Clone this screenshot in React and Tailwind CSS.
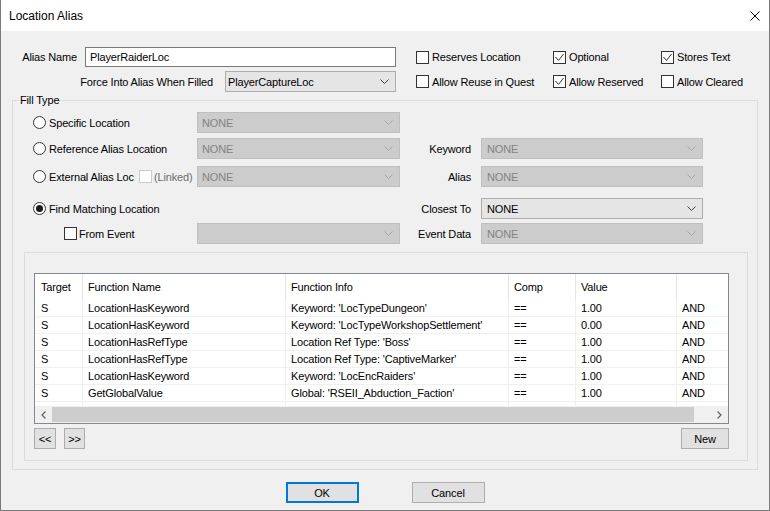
import React from 'react';

const conditions = [
  { target: 'S', name: 'LocationHasKeyword', info: "Keyword: 'LocTypeDungeon'", comp: '==', value: '1.00', op: 'AND' },
  { target: 'S', name: 'LocationHasKeyword', info: "Keyword: 'LocTypeWorkshopSettlement'", comp: '==', value: '0.00', op: 'AND' },
  { target: 'S', name: 'LocationHasRefType', info: "Location Ref Type: 'Boss'", comp: '==', value: '1.00', op: 'AND' },
  { target: 'S', name: 'LocationHasRefType', info: "Location Ref Type: 'CaptiveMarker'", comp: '==', value: '1.00', op: 'AND' },
  { target: 'S', name: 'LocationHasKeyword', info: "Keyword: 'LocEncRaiders'", comp: '==', value: '1.00', op: 'AND' },
  { target: 'S', name: 'GetGlobalValue', info: "Global: 'RSEII_Abduction_Faction'", comp: '==', value: '1.00', op: 'AND' },
];

function Chevron({ color }) {
  return (
    <svg width="9" height="5" viewBox="0 0 9 5" className="shrink-0">
      <path d="M0.5 0.5 L4.5 4.5 L8.5 0.5" fill="none" stroke={color} strokeWidth="1" />
    </svg>
  );
}

function Dropdown({ className, value, disabled }) {
  return (
    <div
      className={`flex items-center justify-between h-[21px] border pr-[6px] shrink-0 ${
        disabled ? 'bg-[#cccccc] border-[#bfbfbf] text-[#838383]' : 'bg-[#e5e5e5] border-[#adadad] text-black'
      } ${className}`}
    >
      <span>{value}</span>
      <Chevron color={disabled ? '#a8a8a8' : '#404040'} />
    </div>
  );
}

function Checkbox({ checked, disabled }) {
  return (
    <span
      className={`w-[13px] h-[13px] border bg-white flex items-center justify-center shrink-0 ${
        disabled ? 'border-[#cccccc]' : 'border-[#333333]'
      }`}
    >
      {checked && (
        <svg width="11" height="11" viewBox="0 0 11 11">
          <path d="M1.5 5 L4.5 8.5 L9.5 2" fill="none" stroke="#333333" strokeWidth="1" />
        </svg>
      )}
    </span>
  );
}

function Radio({ checked }) {
  return (
    <span className="w-[13px] h-[13px] rounded-full border border-[#333333] bg-white flex items-center justify-center shrink-0">
      {checked && <span className="w-[7px] h-[7px] rounded-full bg-[#1a1a1a]" />}
    </span>
  );
}

function CheckItem({ className, label, checked }) {
  return (
    <div className={`flex items-center ${className}`}>
      <Checkbox checked={checked} />
      <span className="ml-[3px]">{label}</span>
    </div>
  );
}

function Button({ className, children }) {
  return (
    <div className={`h-[21px] flex items-center justify-center bg-[#e1e1e1] shrink-0 ${className}`}>
      {children}
    </div>
  );
}

export default function App() {
  return (
    <div className="w-[770px] h-[511px] flex flex-col border-x border-b border-[#7a7a7a] bg-[#f0f0f0] text-[11px] leading-[16px] tracking-[-0.15px] text-black font-['Liberation_Sans',Arial,sans-serif] whitespace-nowrap select-none overflow-hidden">
      {/* title bar */}
      <div className="h-[31px] bg-white flex items-center justify-between pl-[8px] pr-[9px] shrink-0">
        <span className="text-[12px] tracking-normal">Location Alias</span>
        <svg width="10" height="10" viewBox="0 0 10 10">
          <path d="M0.5 0.5 L9.5 9.5 M9.5 0.5 L0.5 9.5" stroke="#000" strokeWidth="1" />
        </svg>
      </div>

      <div className="flex flex-col pt-[16px]">
        {/* alias name row */}
        <div className="flex items-center h-[20px]">
          <div className="w-[76px] text-right">Alias Name</div>
          <div className="ml-[8px] w-[311px] h-[20px] bg-white border border-[#7a7a7a] flex items-center pl-[4px]">
            PlayerRaiderLoc
          </div>
          <div className="ml-[20px] flex items-center">
            <CheckItem className="w-[137px]" label="Reserves Location" />
            <CheckItem className="w-[108px]" label="Optional" checked />
            <CheckItem label="Stores Text" checked />
          </div>
        </div>

        {/* force into alias row */}
        <div className="flex items-center h-[21px] mt-[4px]">
          <div className="w-[212px] text-right">Force Into Alias When Filled</div>
          <Dropdown className="ml-[12px] w-[171px] pl-[2px]" value="PlayerCaptureLoc" />
          <div className="ml-[20px] flex items-center">
            <CheckItem className="w-[137px]" label="Allow Reuse in Quest" />
            <CheckItem className="w-[108px]" label="Allow Reserved" checked />
            <CheckItem label="Allow Cleared" />
          </div>
        </div>

        {/* fill type group */}
        <div className="mt-[8px] ml-[11px] w-[746px] h-[370px] border border-[#dcdcdc] flex flex-col">
          <div className="-mt-[9px] ml-[6px] px-[1px] w-fit bg-[#f0f0f0]">Fill Type</div>

          <div className="flex items-center h-[21px] mt-[4px] ml-[20px]">
            <div className="w-[164px] flex items-center">
              <Radio />
              <span className="ml-[3px]">Specific Location</span>
            </div>
            <Dropdown className="w-[203px] pl-[4px]" value="NONE" disabled />
          </div>

          <div className="flex items-center h-[21px] mt-[5px] ml-[20px]">
            <div className="w-[164px] flex items-center">
              <Radio />
              <span className="ml-[3px]">Reference Alias Location</span>
            </div>
            <Dropdown className="w-[203px] pl-[4px]" value="NONE" disabled />
            <div className="w-[71px] text-right">Keyword</div>
            <Dropdown className="ml-[10px] w-[222px] pl-[5px]" value="NONE" disabled />
          </div>

          <div className="flex items-center h-[21px] mt-[7px] ml-[20px]">
            <div className="w-[164px] flex items-center">
              <div className="w-[106px] flex items-center">
                <Radio />
                <span className="ml-[3px]">External Alias Loc</span>
              </div>
              <Checkbox disabled />
              <span className="ml-[2px] text-[#6d6d6d]">(Linked)</span>
            </div>
            <Dropdown className="w-[203px] pl-[4px]" value="NONE" disabled />
            <div className="w-[71px] text-right">Alias</div>
            <Dropdown className="ml-[10px] w-[222px] pl-[5px]" value="NONE" disabled />
          </div>

          <div className="flex items-center h-[21px] mt-[11px] ml-[20px]">
            <div className="w-[164px] flex items-center">
              <Radio checked />
              <span className="ml-[3px]">Find Matching Location</span>
            </div>
            <div className="w-[203px]" />
            <div className="w-[71px] text-right">Closest To</div>
            <Dropdown className="ml-[10px] w-[222px] pl-[5px]" value="NONE" />
          </div>

          <div className="flex items-center h-[21px] mt-[4px] ml-[20px]">
            <div className="w-[164px] flex items-center pl-[31px]">
              <Checkbox />
              <span className="ml-[2px]">From Event</span>
            </div>
            <Dropdown className="w-[203px] pl-[4px]" value="" disabled />
            <div className="w-[71px] text-right">Event Data</div>
            <Dropdown className="ml-[10px] w-[222px] pl-[5px]" value="NONE" disabled />
          </div>

          {/* conditions box */}
          <div className="mt-[8px] ml-[11px] w-[724px] h-[209px] border border-[#dcdcdc] flex flex-col">
            <div className="ml-[9px] mt-[20px] w-[695px] h-[151px] border border-[#828790] bg-white flex flex-col overflow-hidden">
              <div className="h-[26px] flex shrink-0">
                <div className="w-[48px] pl-[6px] flex items-center border-r border-[#e5e5e5]">Target</div>
                <div className="w-[203px] pl-[5px] flex items-center border-r border-[#e5e5e5]">Function Name</div>
                <div className="w-[223px] pl-[5px] flex items-center border-r border-[#e5e5e5]">Function Info</div>
                <div className="w-[67px] pl-[5px] flex items-center border-r border-[#e5e5e5]">Comp</div>
                <div className="w-[101px] pl-[5px] flex items-center border-r border-[#e5e5e5]">Value</div>
                <div className="flex-1" />
              </div>
              {conditions.map((c, i) => (
                <div key={i} className="h-[17px] flex shrink-0 border-b border-[#f0f0f0]">
                  <div className="w-[48px] pl-[6px] flex items-center border-r border-[#f0f0f0]">{c.target}</div>
                  <div className="w-[203px] pl-[5px] flex items-center border-r border-[#f0f0f0]">{c.name}</div>
                  <div className="w-[223px] pl-[5px] flex items-center border-r border-[#f0f0f0]">{c.info}</div>
                  <div className="w-[67px] pl-[5px] flex items-center border-r border-[#f0f0f0]">{c.comp}</div>
                  <div className="w-[101px] pl-[5px] flex items-center border-r border-[#f0f0f0]">{c.value}</div>
                  <div className="flex-1 pl-[5px] flex items-center">{c.op}</div>
                </div>
              ))}
              <div className="h-[4px] flex shrink-0">
                <div className="w-[48px] border-r border-[#f0f0f0]" />
                <div className="w-[203px] border-r border-[#f0f0f0]" />
                <div className="w-[223px] border-r border-[#f0f0f0]" />
                <div className="w-[67px] border-r border-[#f0f0f0]" />
                <div className="w-[101px] border-r border-[#f0f0f0]" />
              </div>
              {/* horizontal scrollbar */}
              <div className="h-[17px] flex bg-[#f0f0f0] shrink-0">
                <div className="w-[17px] flex items-center justify-center">
                  <svg width="5" height="8" viewBox="0 0 5 8">
                    <path d="M4.5 0.5 L1 4 L4.5 7.5" fill="none" stroke="#606060" strokeWidth="1.2" />
                  </svg>
                </div>
                <div className="flex-1 flex items-center">
                  <div className="w-[642px] h-[15px] bg-[#cdcdcd]" />
                </div>
                <div className="w-[17px] flex items-center justify-center">
                  <svg width="5" height="8" viewBox="0 0 5 8">
                    <path d="M0.5 0.5 L4 4 L0.5 7.5" fill="none" stroke="#606060" strokeWidth="1.2" />
                  </svg>
                </div>
              </div>
            </div>

            <div className="mt-[4px] ml-[9px] w-[695px] flex items-center">
              <Button className="w-[22px] border border-[#adadad]">&lt;&lt;</Button>
              <Button className="ml-[8px] w-[21px] border border-[#adadad]">&gt;&gt;</Button>
              <Button className="ml-auto w-[48px] border border-[#adadad]">New</Button>
            </div>
          </div>
        </div>

        {/* dialog buttons */}
        <div className="mt-[12px] flex justify-center gap-[53px]">
          <Button className="w-[73px] border-2 border-[#0078d7]">OK</Button>
          <Button className="w-[73px] border border-[#adadad]">Cancel</Button>
        </div>
      </div>
    </div>
  );
}
